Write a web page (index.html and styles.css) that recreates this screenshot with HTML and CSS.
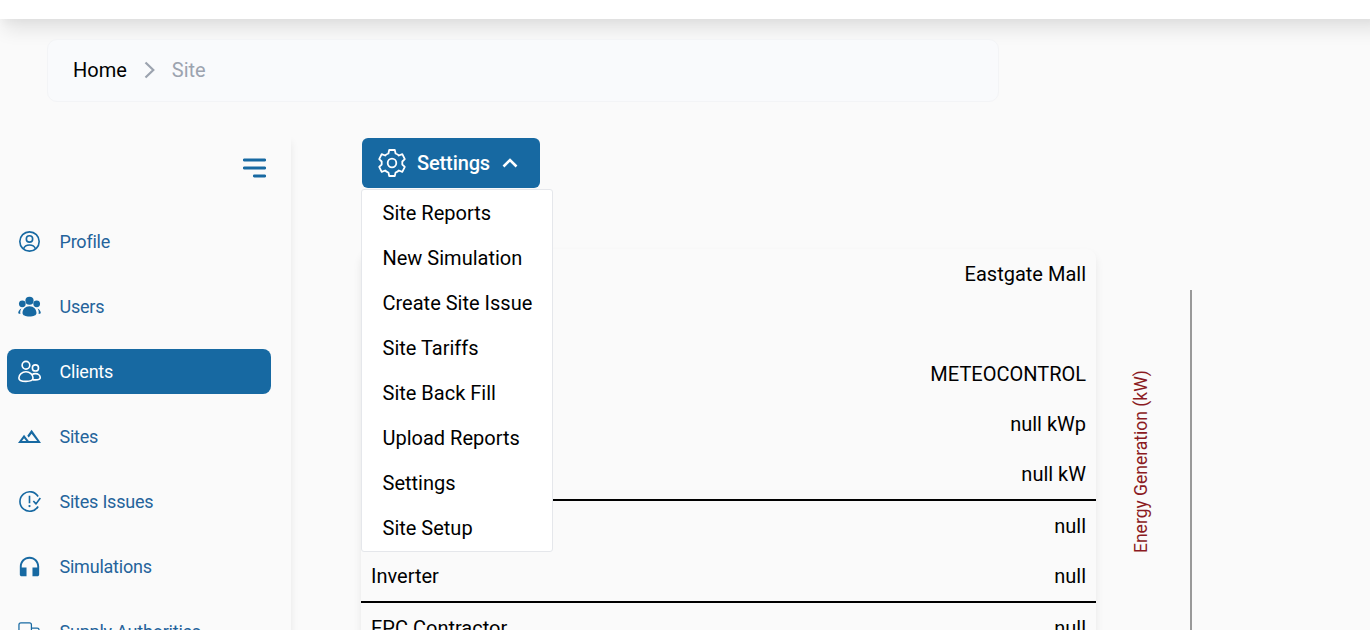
FILE: index.html
```html
<!DOCTYPE html>
<html lang="en">
<head>
<meta charset="utf-8">
<title>Site</title>
<link rel="stylesheet" href="styles.css">
</head>
<body>
<header class="topbar"></header>
<nav class="breadcrumb">
  <a class="crumb">Home</a>
  <svg class="crumb-sep" viewBox="0 0 11 18"><path d="M1.500 1.500 9.300 9l-7.800 7.500"/></svg>
  <span class="crumb-current">Site</span>
</nav>
<div class="layout">
  <aside class="sidebar">
    <svg class="burger" viewBox="0 0 23 22"><path d="M1.300 3h20.400M1.300 11h20.400M11.300 19h10.400"/></svg>
    <ul class="menu">
      <li class="item"><svg class="icon line" viewBox="0 0 24 24"><circle cx="12" cy="12" r="10.100"/><circle cx="12" cy="9.300" r="3.300"/><path d="M5.700 19.700c1.100-2.700 3.400-4 6.300-4s5.200 1.300 6.300 4"/></svg>Profile</li>
      <li class="item"><svg class="icon solid" viewBox="0 0 24 24"><circle cx="12" cy="6" r="4.300"/><circle cx="4.500" cy="9.200" r="3.500"/><circle cx="19.500" cy="9.200" r="3.500"/><path d="M12 11.800c-4.400 0-7.300 3.400-7.300 7 0 2.500 3 3.600 7.300 3.600s7.300-1.100 7.300-3.600c0-3.600-2.900-7-7.300-7ZM3.600 14C1.500 15 .2 16.800.2 18.900c0 .5.600.8 2.300.8-.4-2.300-.1-4 1.100-5.700ZM20.400 14c2.100 1 3.400 2.800 3.400 4.900 0 .5-.6.800-2.300.8.400-2.300.1-4-1.100-5.700Z"/></svg>Users</li>
      <li class="item active"><svg class="icon line" viewBox="0 0 24 24"><circle cx="8.300" cy="5.500" r="4"/><circle cx="18.200" cy="8.300" r="3.200"/><path d="M8.300 12.300c-4 0-7.400 2.700-7.400 6.400 0 2.700 2.800 3.600 7.400 3.600s7.400-.9 7.400-3.600c0-3.700-3.400-6.400-7.400-6.400ZM14.400 15.500c1-.8 2.400-1.300 3.800-1.300 2.800 0 5 1.800 5 4.300 0 1.500-1.500 2.200-5 2.200h-2.800"/></svg>Clients</li>
      <li class="item"><svg class="icon solid" viewBox="0 0 24 24"><path fill-rule="evenodd" d="M14.200 5 24 18.700H0l6.300-8.500 3.100 4.200 1.900 2.400H20l-5.800-7.700-3 4-1.500-2ZM6.300 13.700 4.100 16.800h4.500Z"/></svg>Sites</li>
      <li class="item"><svg class="icon line" viewBox="0 0 24 24"><path d="M21 6.800A10.200 10.200 0 1 0 21 17.200M12 6v7.800M16 11.500l2.800 3 4.500-6.200"/><circle class="dot" cx="12" cy="16.800" r="1.200"/></svg>Sites Issues</li>
      <li class="item"><svg class="icon solid" viewBox="0 0 24 24"><path d="M12 1.800C6.400 1.800 1.900 6.300 1.900 11.900v8.400c0 1.100.9 2 2 2h5v-9.300H3.900v-1.100c0-4.400 3.600-8 8.100-8s8.100 3.600 8.100 8v1.100h-5v9.300h5c1.100 0 2-.9 2-2v-8.400C22.100 6.300 17.600 1.800 12 1.800Z"/></svg>Simulations</li>
      <li class="item"><svg class="icon line thin" viewBox="0 0 24 24"><path d="M14 16.500H3a2 2 0 0 1-2-2V5a2 2 0 0 1 2-2h9a2 2 0 0 1 2 2v11.500M14 8.500h6a2 2 0 0 1 2 2v9H8v-3"/></svg>Supply Authorities</li>
    </ul>
  </aside>
  <main class="content">
    <div class="dropdown">
      <button class="toggle">
        <svg class="gear" viewBox="0 0 28 28"><path d="M11.200 1h5.600l.8 3.500q2 .7 3.300 2l3.400-1.300 2.500 5-2.500 2.300v3l2.500 2.300-2.500 5-3.400-1.300q-1.300 1.300-3.300 2l-.8 3.500h-5.600l-.8-3.500q-2-.7-3.300-2l-3.400 1.300-2.500-5 2.500-2.300v-3l-2.500-2.300 2.500-5 3.400 1.300q1.300-1.300 3.300-2Z"/><circle cx="14" cy="14" r="4.300"/></svg>
        <span>Settings</span>
        <svg class="chevron" viewBox="0 0 16 10"><path d="m1.500 8.500 6.500-6.500 6.500 6.500"/></svg>
      </button>
      <ul class="options">
        <li>Site Reports</li><li>New Simulation</li><li>Create Site Issue</li><li>Site Tariffs</li><li>Site Back Fill</li><li>Upload Reports</li><li>Settings</li><li>Site Setup</li>
      </ul>
    </div>
    <section class="details">
      <div class="row"><span></span><span>Eastgate Mall</span></div>
      <div class="row"></div>
      <div class="row"><span></span><span>METEOCONTROL</span></div>
      <div class="row"><span></span><span>null kWp</span></div>
      <div class="row ruled"><span></span><span>null kW</span></div>
      <div class="row"><span></span><span>null</span></div>
      <div class="row ruled"><span>Inverter</span><span>null</span></div>
      <div class="row"><span>EPC Contractor</span><span>null</span></div>
    </section>
  </main>
  <section class="chart">
    <div class="axis-title">Energy Generation (kW)</div>
    <div class="axis"></div>
  </section>
</div>
</body>
</html>
```
FILE: styles.css
```css
* { box-sizing: border-box; }
body { margin: 0; height: 630px; overflow: hidden; background: #fafafa; color: #000; font-family: Roboto, sans-serif; font-size: 20px; }
ul { list-style: none; margin: 0; padding: 0; }
svg { display: block; flex: none; fill: none; }
.topbar { width: 1390px; height: 19px; background: #fff; box-shadow: 0 12px 19px -4px rgba(0,0,0,.15), 0 5px 8px -2px rgba(0,0,0,.05); }
.breadcrumb { position: relative; display: flex; align-items: center; width: 952px; height: 63px; margin: 20px 0 0 47px; padding: 0 0 1px 25px; background: #f9fafc; border: 1px solid #f3f4f6; border-radius: 10px; }
.crumb-sep { width: 11px; height: 18px; margin: 0 17px; stroke: #9ca3af; stroke-width: 2.200; }
.crumb-current { color: #9ca3af; }
.layout { display: flex; align-items: flex-start; height: 493px; margin-top: 35px; overflow: hidden; }
.sidebar { width: 291px; height: 560px; padding-top: 20px; box-shadow: 0 5px 8px rgba(0,0,0,.08); }
.burger { width: 23px; height: 22px; margin-left: 243px; stroke: #1769a2; stroke-width: 2.800; stroke-linecap: round; }
.menu { display: flex; flex-direction: column; gap: 20px; margin-top: 40px; padding-left: 7px; }
.item { display: flex; align-items: center; gap: 18.500px; width: 264px; height: 45px; padding-left: 11px; border-radius: 8px; color: #24639b; font-size: 18px; letter-spacing: -.22px; white-space: nowrap; }
.item.active { background: #1769a2; color: #fff; }
.icon { width: 23px; height: 23px; color: #1769a2; }
.active .icon { color: #fff; }
.line { stroke: currentColor; stroke-width: 1.700; stroke-linejoin: round; }
.thin { stroke-width: 1.300; }
.solid, .dot { fill: currentColor; }
.dot { stroke: none; }
.content { width: 735px; margin-left: 70px; padding-top: 1px; }
.dropdown { position: relative; height: 111px; padding-left: 1px; }
.toggle { display: flex; align-items: center; width: 178px; height: 50px; padding: 0 0 0 16px; border: 0; border-radius: 6px; background: #1769a2; color: #fff; font: 500 20px Roboto, sans-serif; letter-spacing: -.12px; }
.gear { width: 28px; height: 28px; margin-right: 11px; stroke: #fff; stroke-width: 1.800; stroke-linejoin: round; }
.chevron { width: 16px; height: 10px; margin-left: 12px; stroke: #fff; stroke-width: 2.600; }
.options { position: absolute; z-index: 2; top: 51px; left: 0; width: 192px; height: 363px; background: #fff; border: 1px solid #e5e7eb; border-radius: 3px; }
.options li { height: 45px; padding-left: 20.500px; line-height: 47px; }
.details { height: 500px; border-radius: 10px; box-shadow: 0 5px 8px rgba(0,0,0,.08); }
.row { display: flex; align-items: center; justify-content: space-between; height: 50px; padding: 0 10px; }
.ruled { height: 52px; border-bottom: 2px solid #000; }
.chart { display: flex; margin-left: 35px; padding-top: 153px; }
.axis-title { width: 20px; height: 263px; writing-mode: vertical-rl; transform: rotate(180deg); color: #8b1a22; font-size: 17.500px; line-height: 20px; white-space: nowrap; }
.axis { width: 2px; height: 360px; margin-left: 39px; background: #999; }
```
